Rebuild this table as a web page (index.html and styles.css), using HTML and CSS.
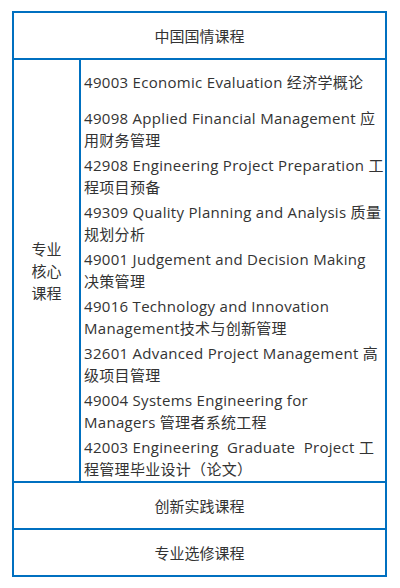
FILE: index.html
```html
<!DOCTYPE html>
<html lang="zh-CN">
<head>
<meta charset="utf-8">
<title>课程设置</title>
<link rel="stylesheet" href="styles.css">
</head>
<body>
<div class="sheet">
  <div class="row row-title">中国国情课程</div>
  <div class="row core">
    <div class="core-label">专业<br>核心<br>课程</div>
    <div class="core-list">
      <p class="first">49003 Economic Evaluation 经济学概论</p>
      <p>49098 Applied Financial Management 应<br>用财务管理</p>
      <p>42908 Engineering Project Preparation 工<br>程项目预备</p>
      <p>49309 Quality Planning and Analysis 质量<br>规划分析</p>
      <p>49001 Judgement and Decision Making<br>决策管理</p>
      <p>49016 Technology and Innovation<br>Management技术与创新管理</p>
      <p>32601 Advanced Project Management 高<br>级项目管理</p>
      <p>49004 Systems Engineering for<br>Managers 管理者系统工程</p>
      <p>42003 Engineering&nbsp; Graduate&nbsp; Project 工<br>程管理毕业设计（论文）</p>
    </div>
  </div>
  <div class="row row-title">创新实践课程</div>
  <div class="row row-title">专业选修课程</div>
</div>
</body>
</html>
```
FILE: styles.css
```css
html, body {
  margin: 0;
  padding: 0;
  background: #fff;
}

body {
  font-family: "Open Sans", "Noto Sans CJK SC", sans-serif;
  font-size: 15px;
  color: #333;
}

.sheet {
  box-sizing: border-box;
  width: 375px;
  margin: 11px 0 0 12px;
  border: 2px solid #0070c0;
}

.row + .row {
  border-top: 2px solid #0070c0;
}

.row-title {
  height: 45px;
  display: flex;
  align-items: center;
  justify-content: center;
}

.core {
  display: flex;
  height: 421px;
}

.core-label {
  width: 65px;
  flex: none;
  border-right: 2px solid #0070c0;
  display: flex;
  align-items: center;
  justify-content: center;
  text-align: center;
  line-height: 22px;
}

.core-list {
  flex: 1;
  padding: 11px 0 0 3px;
  line-height: 22px;
  letter-spacing: 0.3px;
  white-space: nowrap;
}

.core-list p {
  margin: 0 0 3px;
}

.core-list p.first {
  margin-bottom: 14px;
}
```
